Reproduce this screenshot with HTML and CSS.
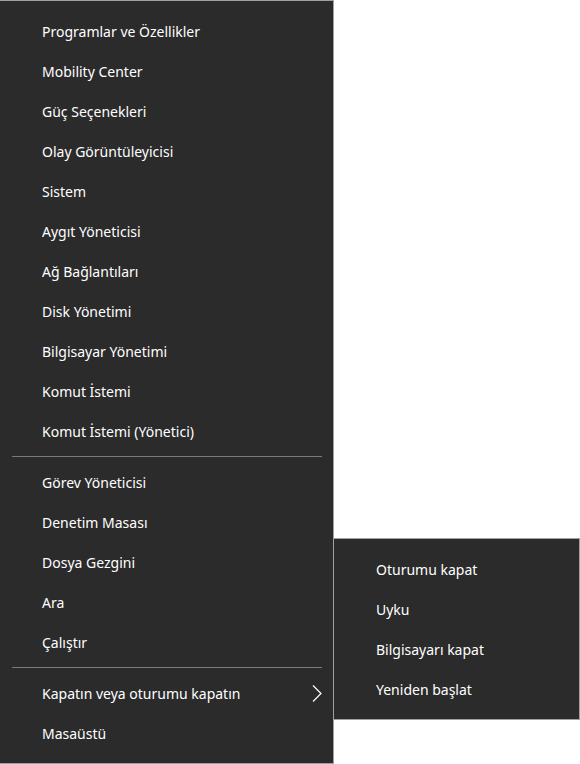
FILE: index.html
```html
<!DOCTYPE html>
<html lang="tr">
<head>
<meta charset="utf-8">
<link rel="stylesheet" href="styles.css">
</head>
<body>
<div class="menu">
  <div class="item">Programlar ve Özellikler</div>
  <div class="item">Mobility Center</div>
  <div class="item">Güç Seçenekleri</div>
  <div class="item">Olay Görüntüleyicisi</div>
  <div class="item">Sistem</div>
  <div class="item">Aygıt Yöneticisi</div>
  <div class="item">Ağ Bağlantıları</div>
  <div class="item">Disk Yönetimi</div>
  <div class="item">Bilgisayar Yönetimi</div>
  <div class="item">Komut İstemi</div>
  <div class="item">Komut İstemi (Yönetici)</div>
  <div class="sep"></div>
  <div class="item">Görev Yöneticisi</div>
  <div class="item">Denetim Masası</div>
  <div class="item">Dosya Gezgini</div>
  <div class="item">Ara</div>
  <div class="item">Çalıştır</div>
  <div class="sep"></div>
  <div class="item has-sub">
    <span>Kapatın veya oturumu kapatın</span>
    <svg class="chev" width="10" height="17" viewBox="0 0 10 17"><path d="M1 0.5 L9 8.5 L1 16.5" fill="none" stroke="#ffffff" stroke-width="1.2"/></svg>
    <div class="submenu">
      <div class="item">Oturumu kapat</div>
      <div class="item">Uyku</div>
      <div class="item">Bilgisayarı kapat</div>
      <div class="item">Yeniden başlat</div>
    </div>
  </div>
  <div class="item">Masaüstü</div>
</div>
</body>
</html>
```
FILE: styles.css
```css
html, body {
  margin: 0;
  padding: 0;
  background: #ffffff;
}
body {
  font-family: "Noto Sans", "Open Sans", sans-serif;
  font-size: 14px;
  color: #ffffff;
}
.menu {
  width: 334px;
  height: 764px;
  background: #2b2b2b;
  border-top: 1px solid #a0a0a0;
  border-right: 1px solid #a0a0a0;
  border-bottom: 1px solid #a0a0a0;
  padding: 10px 0;
  box-sizing: border-box;
  display: flex;
  flex-direction: column;
}
.item {
  box-sizing: border-box;
  height: 40px;
  padding-top: 2px;
  line-height: 38px;
  padding-left: 42px;
  white-space: nowrap;
  flex-shrink: 0;
}
.sep {
  height: 11px;
  flex-shrink: 0;
  display: flex;
  align-items: center;
  padding-left: 12px;
}
.sep::before {
  content: "";
  display: block;
  width: 310px;
  height: 1px;
  background: #7a7a7a;
}
.has-sub {
  position: relative;
  display: flex;
  align-items: center;
  padding-top: 0;
  line-height: 40px;
}
.has-sub > span {
  padding-top: 2px;
}
.chev {
  position: absolute;
  left: 312px;
  top: 12px;
}
.submenu {
  position: absolute;
  left: 333px;
  top: -135px;
  width: 247px;
  box-sizing: border-box;
  background: #2b2b2b;
  border: 1px solid #a0a0a0;
  padding: 10px 0;
}
```
